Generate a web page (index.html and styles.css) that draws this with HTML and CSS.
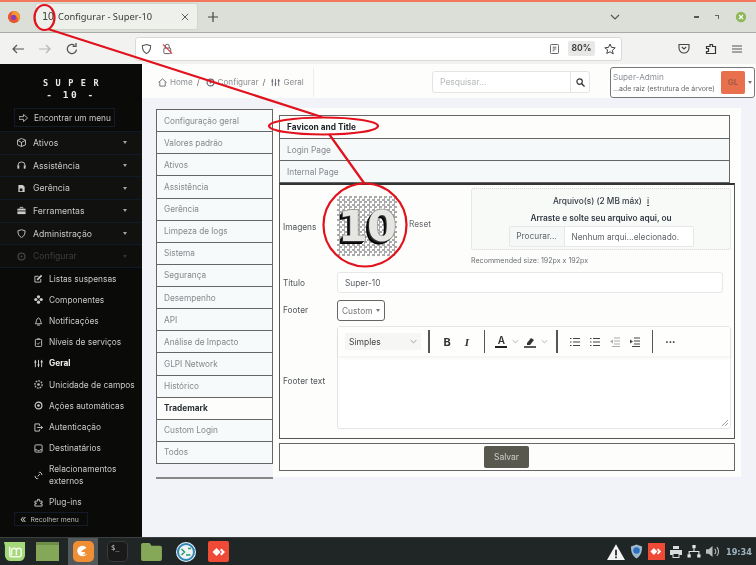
FILE: index.html
```html
<!DOCTYPE html>
<html lang="pt">
<head>
<meta charset="utf-8">
<title>Configurar - Super-10</title>
<link rel="stylesheet" href="styles.css">
</head>
<body>
<div class="screen">
  <header class="titlebar">
    <svg class="ff" viewBox="0 0 16 16" width="14" height="14"><circle cx="8" cy="8" r="7" fill="#e8562e"/><path d="M8 1a7 7 0 0 1 7 7c0 2-1 4-3 5 1-3 0-6-4-7-1 0-2 0-3 1 0-3 1-5 3-6z" fill="#f59a2e"/><circle cx="7.5" cy="8.5" r="3" fill="#8b3fb5"/></svg>
    <div class="tab">
      <span class="favicon">10</span>
      <span class="tabtitle">Configurar - Super-10</span>
      <svg class="tabx" viewBox="0 0 10 10" width="8" height="8"><path d="M1 1l8 8M9 1l-8 8" stroke="#555" stroke-width="1.2"/></svg>
    </div>
    <svg class="plus" viewBox="0 0 10 10" width="10" height="10"><path d="M5 0v10M0 5h10" stroke="#444" stroke-width="1.2"/></svg>
    <div class="spring"></div>
    <svg class="tabsdown" viewBox="0 0 10 6" width="10" height="6"><path d="M1 1l4 4 4-4" fill="none" stroke="#555" stroke-width="1.2"/></svg>
    <div class="winctl">
      <span class="wmin"></span>
      <span class="wmax"></span>
      <svg viewBox="0 0 12 12" width="12" height="12"><circle cx="6" cy="6" r="5.2" fill="#8fb85a"/><path d="M4 4l4 4M8 4l-4 4" stroke="#fff" stroke-width="1.2"/></svg>
    </div>
  </header>

  <nav class="toolbar">
    <svg viewBox="0 0 12 10" width="12" height="10"><path d="M12 5H1M5 1L1 5l4 4" fill="none" stroke="#555" stroke-width="1.2"/></svg>
    <svg class="dim" viewBox="0 0 12 10" width="12" height="10"><path d="M0 5h11M7 1l4 4-4 4" fill="none" stroke="#b5b7b3" stroke-width="1.2"/></svg>
    <svg viewBox="0 0 12 12" width="12" height="12"><path d="M10.5 6.5A4.6 4.6 0 1 1 8.5 2.2M10 0v3.4H6.6" fill="none" stroke="#555" stroke-width="1.3"/></svg>
    <div class="urlbar">
      <svg viewBox="0 0 12 12" width="11" height="12"><path d="M6 1l4.5 1.4c0 4-1 7-4.5 8.6C2.500 9.400 1.500 6.400 1.500 2.400z" fill="none" stroke="#555" stroke-width="1.1"/></svg>
      <svg viewBox="0 0 12 12" width="11" height="12"><rect x="2" y="5" width="7.500" height="6" rx="1" fill="none" stroke="#555"/><path d="M3.500 5V3a2.200 2.200 0 0 1 4.400 0v2" fill="none" stroke="#555"/><path d="M1 1l10 10" stroke="#e0303c" stroke-width="1.200"/></svg>
      <div class="spring"></div>
      <svg viewBox="0 0 10 11" width="9" height="10"><rect x="0.500" y="0.500" width="9" height="10" rx="1" fill="none" stroke="#555"/><path d="M3 3.500h4M3 5.500h4M3 7.500h2" stroke="#555"/></svg>
      <span class="zoompill">80%</span>
      <svg viewBox="0 0 12 12" width="12" height="12"><path d="M6 1l1.500 3.400 3.700.4-2.800 2.500.8 3.700L6 8.700 2.800 10.500l.8-3.700L.8 4.800l3.700-.4z" fill="none" stroke="#444"/></svg>
    </div>
    <div class="tbright">
      <svg viewBox="0 0 12 11" width="12" height="11"><path d="M1 1.500h10v3.500a5 5 0 0 1-10 0z" fill="none" stroke="#444" stroke-width="1.100"/><path d="M3.800 4L6 6l2.200-2" fill="none" stroke="#444" stroke-width="1.100"/></svg>
      <svg viewBox="0 0 12 12" width="12" height="12"><path d="M5 1.500h2.500v2h3v7H1.500V8.500h2v-3h-2v-2h3.500z" fill="none" stroke="#333" stroke-width="1.200"/></svg>
      <svg viewBox="0 0 10 8" width="10" height="8"><path d="M0 1h10M0 4h10M0 7h10" stroke="#555" stroke-width="1.100"/></svg>
    </div>
  </nav>

  <div class="page">
    <aside class="sidebar">
      <div class="logo"><div class="logo1">SUPER</div><div class="logo2">- 10 -</div></div>
      <div class="finder">
        <svg viewBox="0 0 10 8" width="9" height="8"><path d="M0 2.500h5V0l4.500 4L5 8V5.500H0z" fill="none" stroke="#bbb"/></svg>
        <span>Encontrar um menu</span>
      </div>
      <ul class="menu">
        <li class="mi"><svg viewBox="0 0 10 10" width="9" height="9"><path d="M5 .5l4.500 2v5L5 9.500l-4.500-2v-5zM.5 2.500L5 5l4.500-2.500M5 5v4.500" fill="none" stroke="#ccc"/></svg><span>Ativos</span><i class="chev"></i></li>
        <li class="mi"><svg viewBox="0 0 10 10" width="9" height="9"><path d="M1 6V5a4 4 0 0 1 8 0v1" fill="none" stroke="#ccc"/><rect x=".5" y="5" width="2" height="3.500" fill="#ccc"/><rect x="7.500" y="5" width="2" height="3.500" fill="#ccc"/></svg><span>Assistência</span><i class="chev"></i></li>
        <li class="mi"><svg viewBox="0 0 10 10" width="9" height="9"><path d="M1.500 1h5l2 2v6h-7z" fill="#ccc"/><rect x="3" y="5" width="3" height="3" fill="#111"/></svg><span>Gerência</span><i class="chev"></i></li>
        <li class="mi"><svg viewBox="0 0 10 10" width="9" height="9"><path d="M3.500 3V1.500h3V3" fill="none" stroke="#ccc"/><rect x=".5" y="3" width="9" height="6" fill="#ccc"/><path d="M.5 5.500h9" stroke="#111"/></svg><span>Ferramentas</span><i class="chev"></i></li>
        <li class="mi"><svg viewBox="0 0 10 10" width="9" height="9"><path d="M5 .8l4 1.200c0 3.500-1 6-4 7.500C2 8 1 5.500 1 2z" fill="none" stroke="#ccc"/></svg><span>Administração</span><i class="chev"></i></li>
        <li class="mi active"><svg viewBox="0 0 10 10" width="9" height="9"><circle cx="5" cy="5" r="3.800" fill="none" stroke="#444" stroke-width="1.500"/><circle cx="5" cy="5" r="1.200" fill="#444"/></svg><span>Configurar</span><i class="chev"></i></li>
      </ul>
      <ul class="submenu">
        <li class="si"><svg viewBox="0 0 10 10" width="9" height="9"><path d="M1 2.500h4M1 2.500V9h6.500V5.500" fill="none" stroke="#ccc"/><path d="M3.500 6.500l5-5" stroke="#ccc" stroke-width="1.800"/></svg><span>Listas suspensas</span></li>
        <li class="si"><svg viewBox="0 0 10 10" width="9" height="9"><circle cx="5" cy="2" r="1.800" fill="#ccc"/><circle cx="5" cy="8" r="1.800" fill="#ccc"/><circle cx="2" cy="5" r="1.800" fill="#ccc"/><circle cx="8" cy="5" r="1.800" fill="#ccc"/></svg><span>Componentes</span></li>
        <li class="si"><svg viewBox="0 0 10 10" width="9" height="9"><path d="M1.500 7.500C3 6 2 2 5 1c3 1 2 5 3.500 6.500z" fill="none" stroke="#ccc"/><path d="M3.500 9h3" stroke="#ccc"/></svg><span>Notificações</span></li>
        <li class="si"><svg viewBox="0 0 10 10" width="9" height="9"><rect x="1.500" y="1.500" width="7" height="8" rx="1" fill="none" stroke="#ccc"/><path d="M3.500 1h3M3.500 6l1 1 2-2" fill="none" stroke="#ccc"/></svg><span>Níveis de serviços</span></li>
        <li class="si on"><svg viewBox="0 0 10 10" width="9" height="9"><path d="M1.500 1v8M5 1v8M8.500 1v8" stroke="#ddd"/><path d="M.5 3.500h2M4 6.500h2M7.500 3h2" stroke="#ddd" stroke-width="1.500"/></svg><span>Geral</span></li>
        <li class="si"><svg viewBox="0 0 10 10" width="9" height="9"><circle cx="5" cy="5" r="4" fill="none" stroke="#bbb" stroke-width="1.400" stroke-dasharray="2 1"/><circle cx="5" cy="5" r="1.500" fill="#bbb"/></svg><span>Unicidade de campos</span></li>
        <li class="si"><svg viewBox="0 0 10 10" width="9" height="9"><circle cx="5" cy="5" r="3.800" fill="none" stroke="#ccc" stroke-width="1.300"/><circle cx="5" cy="5" r="1.500" fill="#ccc"/></svg><span>Ações automáticas</span></li>
        <li class="si"><svg viewBox="0 0 10 10" width="9" height="9"><path d="M6 3V1H1v8h5V7M3.500 5h6M7.500 3.200L9.500 5l-2 1.800" fill="none" stroke="#ccc"/></svg><span>Autenticação</span></li>
        <li class="si"><svg viewBox="0 0 10 10" width="9" height="9"><rect x="1" y="1" width="8" height="8" rx="1" fill="none" stroke="#ccc"/><path d="M1 6.500h2.500l1 1h1l1-1H9" fill="none" stroke="#ccc"/></svg><span>Destinatários</span></li>
        <li class="si tall"><svg viewBox="0 0 10 10" width="9" height="9"><path d="M4 6L6.500 3.500M5.500 2l1-1 2.500 2.500-1 1M4.500 8l-1 1L1 6.500l1-1" fill="none" stroke="#ccc" stroke-width="1.100"/></svg><span>Relacionamentos externos</span></li>
        <li class="si"><svg viewBox="0 0 10 10" width="9" height="9"><path d="M4 1.500h2v2h3v2H7.500v1H9v2.500H1V6.500h1.500v-1H1v-2h3z" fill="none" stroke="#ccc"/></svg><span>Plug-ins</span></li>
      </ul>
      <div class="collapse"><span class="chevs">«</span><span>Recolher menu</span></div>
    </aside>

    <main class="main">
      <div class="topbar">
        <div class="crumbs">
          <svg viewBox="0 0 10 10" width="9" height="9"><path d="M.5 5L5 1l4.500 4M2 4.500V9h6V4.500" fill="none" stroke="#667"/></svg><span>Home</span><b>/</b>
          <svg viewBox="0 0 10 10" width="9" height="9"><circle cx="5" cy="5" r="3.800" fill="none" stroke="#667" stroke-width="1.300"/><circle cx="5" cy="5" r="1.200" fill="#667"/></svg><span>Configurar</span><b>/</b>
          <svg viewBox="0 0 10 10" width="9" height="9"><path d="M1.500 1v8M5 1v8M8.500 1v8" stroke="#667"/><path d="M.5 3.500h2M4 6.500h2M7.500 3h2" stroke="#667" stroke-width="1.500"/></svg><span>Geral</span>
        </div>
        <div class="spring"></div>
        <div class="search">
          <span class="ph">Pesquisar...</span>
          <span class="sbtn"><svg viewBox="0 0 10 10" width="9" height="9"><circle cx="4" cy="4" r="3" fill="none" stroke="#333" stroke-width="1.300"/><path d="M6.300 6.300L9.500 9.500" stroke="#333" stroke-width="1.500"/></svg></span>
        </div>
        <div class="user">
          <div class="utext"><div class="uname">Super-Admin</div><div class="uent">...ade raiz (estrutura de árvore)</div></div>
          <div class="avatar">GL</div>
          <i class="ucaret"></i>
        </div>
      </div>

      <div class="content">
        <div class="vcol">
          <ul class="vtabs">
            <li>Configuração geral</li><li>Valores padrão</li><li>Ativos</li><li>Assistência</li><li>Gerência</li><li>Limpeza de logs</li><li>Sistema</li><li>Segurança</li><li>Desempenho</li><li>API</li><li>Análise de Impacto</li><li>GLPI Network</li><li>Histórico</li><li class="sel">Trademark</li><li>Custom Login</li><li>Todos</li>
          </ul>
          <div class="vrule"></div>
        </div>
        <section class="card">
          <ul class="htabs">
            <li class="sel">Favicon and Title</li>
            <li>Login Page</li>
            <li>Internal Page</li>
          </ul>
          <form class="form">
            <label class="lab">Imagens</label>
            <div class="imgrow">
              <div class="checker"><span class="ten">10</span></div>
              <span class="reset">Reset</span>
              <div class="dropcol">
                <div class="drop">
                  <div class="dtitle">Arquivo(s) (2 MB máx) <u>i</u></div>
                  <div class="dsub">Arraste e solte seu arquivo aqui, ou</div>
                  <div class="file"><span class="fbtn">Procurar...</span><span class="fname">Nenhum arqui...elecionado.</span></div>
                </div>
                <div class="rec">Recommended size: 192px x 192px</div>
              </div>
            </div>
            <label class="lab">Título</label>
            <div class="titleinput">Super-10</div>
            <label class="lab">Footer</label>
            <div><span class="select">Custom <i class="caret"></i></span></div>
            <label class="lab low">Footer text</label>
            <div class="editor">
              <div class="edbar">
                <span class="fmt">Simples<svg viewBox="0 0 10 6" width="7" height="5"><path d="M1 1l4 4 4-4" fill="none" stroke="#777"/></svg></span>
                <i class="sep s1"></i>
                <b class="eb">B</b><em class="ei">I</em>
                <i class="sep s2"></i>
                <span class="ea">A</span><svg class="cv" viewBox="0 0 10 6" width="7" height="5"><path d="M1 1l4 4 4-4" fill="none" stroke="#999"/></svg>
                <svg class="pen" viewBox="0 0 12 12" width="12" height="12"><path d="M3 7l4-5 3 2-4 5H3z" fill="#333"/><path d="M0 11h12" stroke="#222" stroke-width="1.500"/></svg><svg class="cv" viewBox="0 0 10 6" width="7" height="5"><path d="M1 1l4 4 4-4" fill="none" stroke="#999"/></svg>
                <i class="sep s3"></i>
                <svg class="li" viewBox="0 0 10 10" width="10" height="10"><path d="M3 1.500h7M3 5h7M3 8.500h7M0 1.500h1.500M0 5h1.500M0 8.500h1.500" stroke="#444"/></svg>
                <svg class="li" viewBox="0 0 10 10" width="10" height="10"><path d="M3 1.500h7M3 5h7M3 8.500h7M0 1.500h1.500M0 5h1.500M0 8.500h1.500" stroke="#444"/></svg>
                <svg class="li" viewBox="0 0 10 10" width="10" height="10"><path d="M4 1h6M4 4h6M4 7h6M2 9.500h8" stroke="#aaa"/><path d="M3 2.500v4L0 4.500z" fill="#aaa"/></svg>
                <svg class="li" viewBox="0 0 10 10" width="10" height="10"><path d="M4 1h6M4 4h6M4 7h6M2 9.500h8" stroke="#444"/><path d="M0 2.500v4l3-2z" fill="#444"/></svg>
                <i class="sep s4"></i>
                <span class="more">•••</span>
              </div>
              <div class="edbody"><svg class="grip" viewBox="0 0 6 6" width="6" height="6"><path d="M0 6l6-6M3 6l3-3" stroke="#888" stroke-width=".8"/></svg></div>
            </div>
          </form>
          <div class="savebox"><button class="save" type="button">Salvar</button></div>
        </section>
      </div>
    </main>
  </div>

  <footer class="taskbar">
    <div class="tleft">
      <svg viewBox="0 0 24 24" width="23" height="23"><path d="M1 2h22v14a6 6 0 0 1-6 6H8a6 6 0 0 1-6-6V6z" fill="#a5d878"/><path d="M7 7v8a2.500 2.500 0 0 0 2.500 2.500h7A2.500 2.500 0 0 0 19 15v-4a2.500 2.500 0 0 0-5 0v5M14 11a2.500 2.500 0 0 0-5 0v5" fill="none" stroke="#f0f8e6" stroke-width="1.600"/></svg>
      <span class="greenwin"></span>
      <span class="activeapp"><span class="ffapp"><svg viewBox="0 0 16 16" width="14" height="14"><path d="M12 3a6 6 0 1 0 1 6c-1 2-4 3-6 1 3 1 4-1 3-2H6c0-2 3-3 6-5z" fill="#fff"/></svg></span></span>
      <span class="term">$_</span>
      <svg viewBox="0 0 24 20" width="23" height="19"><path d="M1 3a2 2 0 0 1 2-2h7l2 3h9a2 2 0 0 1 2 2v12a2 2 0 0 1-2 2H3a2 2 0 0 1-2-2z" fill="#85a858"/></svg>
      <svg class="remote" viewBox="0 0 22 22" width="22" height="22"><circle cx="11" cy="11" r="10" fill="#eef4f4"/><circle cx="11" cy="11" r="8" fill="none" stroke="#2d86b8" stroke-width="2"/><path d="M6.500 8l3 3-3 3M11 14l4.500 0M13 7.500h3" fill="none" stroke="#2b9a6e" stroke-width="1.500"/></svg>
      <span class="anydesk"><svg viewBox="0 0 14 10" width="14" height="10"><path d="M4.500 1L8.500 5l-4 4L.5 5z" fill="#fff"/><path d="M9.500 1.500L13 5l-3.500 3.500L8 7l2-2-2-2z" fill="#fff"/></svg></span>
    </div>
    <div class="spring"></div>
    <div class="tray">
      <svg viewBox="0 0 16 14" width="18" height="16"><path d="M8 0l8 14H0z" fill="#f4f4f4"/><path d="M8 5v5M8 11v1.500" stroke="#222" stroke-width="1.500"/></svg>
      <svg viewBox="0 0 14 16" width="13" height="15"><path d="M7 .5l6 2c0 6-1.500 10-6 13-4.500-3-6-7-6-13z" fill="#9fb8cc"/><circle cx="7" cy="7" r="3.500" fill="#2a6fc0"/></svg>
      <span class="anytray"><svg viewBox="0 0 14 10" width="12" height="9"><path d="M4.500 1L8.500 5l-4 4L.5 5z" fill="#fff"/><path d="M9.500 1.500L13 5l-3.500 3.500L8 7l2-2-2-2z" fill="#fff"/></svg></span>
      <svg viewBox="0 0 12 12" width="12" height="12"><path d="M3 0h6v3H3zM0 4h12v5H9.500v3h-7V9H0z" fill="#d8dcdc"/><path d="M3.500 8h5v3h-5z" fill="#222"/></svg>
      <svg viewBox="0 0 12 12" width="14" height="13"><path d="M4.500 0h3v3h-3zM0 8.500h3v3H0zM9 8.500h3v3H9z" fill="#e4e4e4"/><path d="M6 3v3M1.500 8.500V6h9v2.500" fill="none" stroke="#e4e4e4"/></svg>
      <svg viewBox="0 0 12 12" width="13" height="13"><path d="M0 4h2.500L6 1v10L2.500 8H0z" fill="#b8bcbc"/><path d="M8 3.500a3.500 3.500 0 0 1 0 5M10 2a6 6 0 0 1 0 8" fill="none" stroke="#b8bcbc"/></svg>
      <span class="clock">19:34</span>
    </div>
  </footer>

  <svg class="marks" viewBox="0 0 756 565" width="756" height="565">
    <path class="mk" d="M48 29L322 117M329 134L364 183"/>
    <ellipse class="mk" cx="44.500" cy="17.500" rx="10" ry="12.500"/>
    <ellipse class="mk" cx="323.500" cy="126" rx="54.500" ry="8.500"/>
    <circle class="mk" cx="365" cy="225" r="41.500"/>
  </svg>
</div>
</body>
</html>
```
FILE: styles.css
```css
* { box-sizing: border-box; }
html, body { margin: 0; padding: 0; overflow: hidden; }
body { width: 756px; height: 565px; font-family: Inter, "Liberation Sans", sans-serif; color: #444; }
ul { list-style: none; margin: 0; padding: 0; }
svg { flex: none; display: block; }
.spring { flex: 1; }

.screen { position: relative; width: 756px; height: 565px; display: flex; flex-direction: column; overflow: hidden; filter: blur(.35px); }

.titlebar { height: 33px; flex: none; display: flex; align-items: center; background: #dcdfd8; border-top: 2px solid #f0775a; border-bottom: 1px solid #a9aba6; padding-bottom: 1px; }
.ff { margin-left: 7px; }
.tab { width: 163px; height: 27px; margin-left: 14px; display: flex; align-items: center; background: #eef0eb; border: 1px solid #d2d4cf; border-radius: 3px; padding-left: 6px; }
.favicon { width: 16px; font: 400 10px "DejaVu Sans", sans-serif; color: #444; letter-spacing: -.5px; }
.tabtitle { flex: 1; font: 9.300px "Noto Sans", sans-serif; color: #3a3a3a; white-space: nowrap; }
.tabx { margin-right: 8px; }
.plus { margin-left: 10px; }
.tabsdown { margin-right: 74px; }
.winctl { display: flex; align-items: center; gap: 16px; margin-right: 9px; }
.wmin { width: 5px; height: 2px; background: #555; }
.wmax { width: 4px; height: 4px; border-top: 1.500px solid #666; border-right: 1.500px solid #666; }

.toolbar { height: 31px; flex: none; display: flex; align-items: center; gap: 15px; padding-left: 12px; background: #f2f3f0; }
.urlbar { width: 487px; height: 24px; margin-left: 42px; display: flex; align-items: center; gap: 10px; padding: 0 5px; background: #fff; border: 1px solid #d8dad6; border-radius: 3px; }
.zoompill { width: 27px; height: 15px; margin-left: -1px; margin-right: -1px; background: #e8e9e6; border-radius: 2px; font: 700 8.500px/15px Inter, sans-serif; text-align: center; color: #444; }
.tbright { display: flex; align-items: center; gap: 15px; margin-left: 41px; }

.page { flex: 1; min-height: 0; display: flex; }

.sidebar { width: 142px; flex: none; background: #0a0a09; display: flex; flex-direction: column; color: #c8c8c8; }
.logo { height: 40px; padding-top: 14px; text-align: center; font: 700 8.500px/11px "DejaVu Sans Mono", monospace; color: #e8e8e8; }
.logo1 { letter-spacing: 7.500px; padding-left: 7px; }
.logo2 { letter-spacing: 2.500px; font-size: 9.500px; }
.finder { width: 101px; height: 19px; margin: 4px 0 0 14px; display: flex; align-items: center; gap: 6px; padding-left: 4px; border: 1px solid #131b2b; font-size: 8.300px; white-space: nowrap; }
.menu { margin-top: 4px; border-top: 1px solid #121a28; }
.mi { height: 22.700px; display: flex; align-items: center; padding: 0 15px 0 17px; border-bottom: 1px solid #121a28; background: #111110; font-size: 8.700px; }
.mi span { flex: 1; margin-left: 7px; }
.mi.active { color: #3e3e3e; background: #0e0e0d; }
.chev { width: 4px; height: 3px; border-top: 3px solid currentColor; border-left: 2px solid transparent; border-right: 2px solid transparent; opacity: .8; }
.si { height: 21.200px; display: flex; align-items: center; padding-left: 34px; font-size: 8.350px; }
.si span { margin-left: 6px; white-space: nowrap; }
.si.on { color: #eee; font-weight: 700; }
.si.tall { height: 33px; line-height: 12px; }
.si.tall span { white-space: normal; width: 72px; }
.collapse { width: 74px; height: 14px; margin: -1px 0 0 14px; display: flex; align-items: center; gap: 4px; padding-left: 5px; border: 1px solid #131b2b; font-size: 6.800px; white-space: nowrap; color: #bbb; }
.chevs { font-size: 11px; line-height: 10px; }

.main { flex: 1; display: flex; flex-direction: column; background: #f1f3f9; min-width: 0; }
.topbar { height: 34px; flex: none; display: flex; align-items: center; background: #fdfdfb; position: relative; }
.crumbs { width: 172px; height: 29px; margin-top: 2px; display: flex; align-items: center; gap: 3px; padding-left: 16px; border-right: 1px solid #eceee9; font-size: 8.100px; color: #8a8d90; white-space: nowrap; }
.crumbs b { font-weight: 400; margin: 0 3px 0 1px; color: #666; }
.search { width: 158px; height: 22px; display: flex; align-items: center; margin-top: 2px; border: 1px solid #e3e5e3; border-radius: 3px; background: #fff; }
.ph { flex: 1; padding-left: 7px; font-size: 8.500px; color: #b6b9ba; }
.sbtn { width: 19px; height: 100%; display: flex; align-items: center; justify-content: center; border-left: 1px solid #e3e5e3; }
.user { width: 145px; height: 31px; margin: 2px 1px 0 20px; display: flex; align-items: center; border: 1px solid #777; border-radius: 3px; padding-left: 2px; background: #fff; }
.utext { flex: 1; min-width: 0; white-space: nowrap; }
.uname { font-size: 8.200px; color: #8a8f96; }
.uent { font-size: 6.950px; color: #66696c; margin-top: 2px; }
.avatar { width: 24px; height: 23px; background: #e8704c; border-radius: 2px; color: #a35a42; font: 700 8px/23px Inter, sans-serif; text-align: center; margin-right: 2px; }
.ucaret { width: 0; height: 0; margin: 0 2px 0 1px; border-top: 3px solid #777; border-left: 2px solid transparent; border-right: 2px solid transparent; }

.content { flex: 1; display: flex; padding: 11px 16px 0 14px; min-height: 0; }
.vcol { width: 117px; flex: none; }
.vtabs { height: 355px; display: flex; flex-direction: column; border: 1px solid #666; border-bottom-width: 1.500px; background: #f7fafa; }
.vtabs li { flex: 1; display: flex; align-items: center; padding-left: 7px; border-bottom: 1px solid #666; font-size: 8.250px; color: #85898c; white-space: nowrap; }
.vtabs li:last-child { border-bottom: 0; }
.vtabs li.sel { background: #fdfdfb; color: #2a2f36; font-weight: 700; }
.vrule { height: 2px; margin-top: 13px; background: #888; }

.card { width: 468px; height: 369px; flex: none; margin-top: -1px; padding: 7px 6px 0 6px; background: #fdfdfb; }
.htabs { width: 451px; border: 1px solid #666; }
.htabs li { height: 22px; display: flex; align-items: center; padding-left: 7px; border-top: 1px solid #666; background: #f6f9fa; font-size: 8.300px; color: #85898c; }
.htabs li:first-child { border-top: 0; }
.htabs li.sel { background: #fdfdfb; color: #22262e; font-weight: 700; }

.form { width: 456px; height: 256px; display: grid; grid-template-columns: 54px 1fr; grid-template-rows: 78px 21px 21px 103px; row-gap: 6px; align-items: center; padding: 3px 3px 0 3px; border: 1px solid #555; border-top: 2px solid #333; }
.lab { font-size: 8.300px; color: #50545a; }
.lab.low { margin-top: 7px; }
.imgrow { display: flex; align-items: flex-start; height: 78px; }
.checker { width: 60px; height: 60px; margin-top: 8px; display: flex; align-items: center; justify-content: center; background-color: #fff; background-image: conic-gradient(#aaa 25%, #fff 0 50%, #aaa 0 75%, #fff 0); background-size: 5px 5px; }
.ten { font: 700 43px/1 "DejaVu Sans", sans-serif; letter-spacing: -1px; color: #e6e6e2; -webkit-text-stroke: 1.500px #8c8c88; paint-order: stroke fill; text-shadow: -1px 1px 0 #333, -2px 2px 0 #111, -3px 3px 0 #000; }
.reset { margin: 31px 0 0 12px; width: 62px; font-size: 8.300px; color: #6a6e72; }
.dropcol { width: 260px; }
.drop { height: 62px; padding-top: 7px; text-align: center; background: #f8faf8; border: 1px dotted #d4d7d4; border-radius: 3px; font-size: 8.300px; color: #333a44; }
.dtitle { font-weight: 500; font-size: 8.300px; }
.dtitle u { margin-left: 3px; }
.dsub { font-weight: 600; margin-top: 7px; line-height: 11px; }
.file { width: 185px; height: 21px; margin: 2px auto 0; display: flex; align-items: center; background: #fff; border: 1px solid #e6e8e7; border-radius: 2px; color: #60656a; font-weight: 400; font-size: 8.300px; }
.fbtn { width: 55px; height: 100%; line-height: 19px; background: #f6f8f8; border-right: 1px solid #e6e8e7; }
.fname { flex: 1; padding-left: 7px; text-align: left; white-space: nowrap; }
.rec { margin-top: 6px; font-size: 7.100px; color: #6a6e72; white-space: nowrap; }
.titleinput { width: 386px; height: 21px; padding-left: 7px; line-height: 20px; border: 1px solid #e6e8e7; border-radius: 3px; background: #fff; font-size: 8.300px; color: #555a5e; }
.select { display: inline-flex; align-items: center; gap: 3px; width: 48px; height: 21px; padding-left: 4px; border: 1px solid #666; border-radius: 3px; background: #fff; font-size: 8.400px; color: #777; }
.caret { width: 0; height: 0; border-top: 3px solid #777; border-left: 2px solid transparent; border-right: 2px solid transparent; }
.editor { width: 394px; height: 103px; display: flex; flex-direction: column; border: 1px solid #e3e6e6; border-radius: 3px; background: #fff; }
.edbar { height: 29px; flex: none; display: flex; align-items: center; padding-left: 7px; background: #fefefc; box-shadow: 0 2px 3px rgba(0,0,0,.05); }
.fmt { width: 76px; height: 17px; display: flex; align-items: center; justify-content: space-between; padding: 0 4px; background: #f6f7f5; font-size: 8.500px; color: #444; }
.sep { width: 1.500px; height: 23px; background: #555; }
.s1 { margin-left: 7px; }
.eb { margin-left: 14px; font-size: 11px; color: #333; }
.ei { margin-left: 14px; font: italic 700 11px "Liberation Serif", serif; color: #333; width: 6px; }
.s2 { margin-left: 13px; }
.ea { margin-left: 10px; font-size: 10px; font-weight: 600; color: #333; border-bottom: 2px solid #222; line-height: 11px; width: 12px; text-align: center; }
.cv { margin-left: 5px; }
.pen { margin-left: 5px; }
.s3 { margin-left: 8px; }
.li { margin-left: 10px; }
.s3 + .li { margin-left: 12px; }
.s4 { margin-left: 12px; }
.more { margin-left: 12px; font-size: 6px; color: #333; }
.edbody { flex: 1; position: relative; }
.grip { position: absolute; right: 2px; bottom: 2px; }

.savebox { width: 456px; height: 28px; margin-top: 4px; display: flex; justify-content: center; align-items: center; border: 1px solid #666; }
.save { width: 45px; height: 22px; padding: 0; border: 0; border-radius: 2px; background: #58584f; color: #cfcfca; font: 8.500px Inter, sans-serif; margin-right: 1px; }

.taskbar { height: 28px; flex: none; display: flex; align-items: center; background: #202526; border-top: 1px solid #3b3f40; }
.tleft { display: flex; align-items: center; gap: 10px; padding-left: 3px; height: 100%; }
.greenwin { width: 23px; height: 19px; background: #85a858; border-top: 3px solid #6e8d48; }
.activeapp { width: 30px; height: 28px; margin-left: -1px; display: flex; align-items: center; justify-content: center; background: #53585a; }
.ffapp { width: 21px; height: 21px; display: flex; align-items: center; justify-content: center; border-radius: 5px; background: #ef8e33; }
.term { width: 21px; height: 21px; padding: 2px 0 0 3px; border-radius: 5px; background: #1a1a1a; border: 1px solid #3a3a3a; color: #ddd; font: 7px "DejaVu Sans Mono", monospace; margin: 0 2px 0 -1px; }
.remote { margin-left: 2px; }
.anydesk { width: 21px; height: 21px; margin-left: 1px; display: flex; align-items: center; justify-content: center; background: #ee4a36; border-radius: 2px; }
.tray { display: flex; align-items: center; gap: 5px; padding-right: 4px; }
.anytray { width: 17px; height: 17px; display: flex; align-items: center; justify-content: center; background: #ee4a36; }
.clock { margin-left: 2px; font: 700 8.200px "DejaVu Sans", sans-serif; color: #9fb4c0; }

.marks { position: absolute; left: 0; top: 0; pointer-events: none; }
.mk { fill: none; stroke: #e1121d; stroke-width: 2.200; }
```
